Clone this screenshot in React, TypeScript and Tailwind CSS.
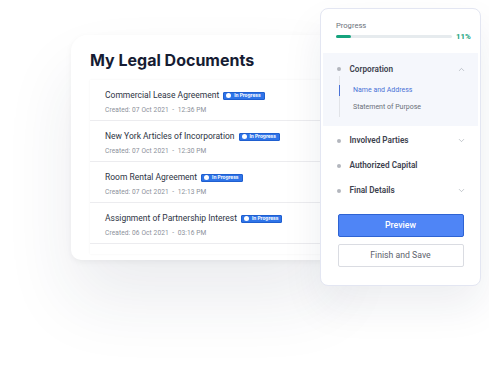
import { ChevronDown, ChevronUp } from 'lucide-react';

const docs = [
  { title: 'Commercial Lease Agreement', created: 'Created: 07 Oct 2021  -  12:36 PM' },
  { title: 'New York Articles of Incorporation', created: 'Created: 07 Oct 2021  -  12:30 PM' },
  { title: 'Room Rental Agreement', created: 'Created: 07 Oct 2021  -  12:13 PM' },
  { title: 'Assignment of Partnership Interest', created: 'Created: 06 Oct 2021  -  03:16 PM' },
];

const Badge = () => (
  <span className="ml-[4px] inline-flex h-[8px] items-center gap-[3px] rounded-[1px] border border-[#1f5fd0] bg-[#2f74e8] pl-[2px] pr-[3px]">
    <span className="h-[5px] w-[5px] rounded-full bg-white" />
    <span className="font-['Inter',sans-serif] text-[4.8px] font-bold leading-none text-white">In Progress</span>
  </span>
);

const DocRow = ({ title, created }: { title: string; created: string }) => (
  <div className="flex h-[41px] flex-col bg-white pl-[15px] pt-[10px]">
    <div className="flex items-center">
      <span className="text-[8.5px] leading-[11px] text-[#2e3444]">{title}</span>
      <Badge />
    </div>
    <span className="mt-[5px] whitespace-pre text-[6.6px] leading-[9px] tracking-[0.1px] text-[#8b909a]">{created}</span>
  </div>
);

const Step = ({ label, chevron }: { label: string; chevron?: boolean }) => (
  <div className="flex h-[25px] items-center pl-[16px] pr-[14px]">
    <span className="h-[4px] w-[4px] shrink-0 rounded-full bg-[#b3b6bd]" />
    <span className="ml-[8.5px] flex-1 text-[8.2px] font-semibold text-[#3d424e]">{label}</span>
    {chevron && <ChevronDown size={9} strokeWidth={1.5} className="text-[#9aa0aa]" />}
  </div>
);

export default function App() {
  return (
    <div className="h-[368px] w-[489px] overflow-hidden bg-white font-['Roboto',sans-serif]">
      <div className="flex items-start pl-[71px] pt-[8px]">
        <div className="mt-[27px] h-[225px] w-[260px] shrink-0 rounded-tl-[16px] rounded-bl-[10px] bg-white shadow-[0_40px_70px_rgba(30,40,80,0.09),0_2px_6px_rgba(0,0,0,0.05)]">
          <h1 className="pl-[19px] pt-[15px] font-['Inter',sans-serif] text-[16px] font-bold leading-[20px] text-[#161c33]">
            My Legal Documents
          </h1>
          <div className="ml-[19px] mt-[10px] flex h-[174px] flex-col gap-[1px] overflow-hidden bg-[#ececef] shadow-[0_0_2px_rgba(0,0,0,0.06)]">
            {docs.map((d) => (
              <DocRow key={d.title} title={d.title} created={d.created} />
            ))}
            <div className="h-[10px] bg-white" />
          </div>
        </div>

        <div className="relative z-10 -ml-[11px] flex h-[278px] w-[161px] shrink-0 flex-col rounded-[8px] border border-[#e3e6f2] bg-white shadow-[0_20px_40px_rgba(30,40,80,0.08)]">
          <div className="pl-[15px] pr-[10px] pt-[11px]">
            <div className="text-[7.6px] leading-[11px] text-[#6b707a]">Progress</div>
            <div className="flex h-[11px] items-center">
              <div className="h-[2.5px] w-[116px] shrink-0 rounded-full bg-[#e6ebee]">
                <div className="h-full w-[15px] rounded-full bg-[#15a37d]" />
              </div>
              <span className="ml-[4px] text-[7.8px] font-bold text-[#15a37d]">11%</span>
            </div>
          </div>

          <div className="mx-[2px] mt-[11px] h-[73px] bg-[#f5f7fc] pt-[9px]">
            <div className="flex h-[14px] items-center pl-[14px] pr-[12px]">
              <span className="h-[4px] w-[4px] shrink-0 rounded-full bg-[#b3b6bd]" />
              <span className="ml-[8.5px] flex-1 text-[8.2px] font-semibold text-[#3d424e]">Corporation</span>
              <ChevronUp size={9} strokeWidth={1.5} className="text-[#9aa0aa]" />
            </div>
            <div className="ml-[16px] flex border-l border-[#e1e3e8]">
              <div className="flex flex-col pb-[4px] pt-[9px]">
                <div className="-ml-px flex h-[11px] items-center border-l border-[#4a72d6] pl-[13px] text-[7px] text-[#4a72d6]">
                  Name and Address
                </div>
                <div className="mt-[5.6px] flex h-[11px] items-center pl-[13px] text-[7px] text-[#6a6f78]">
                  Statement of Purpose
                </div>
              </div>
            </div>
          </div>

          <div className="mt-[2px]">
            <Step label="Involved Parties" chevron />
            <Step label="Authorized Capital" />
            <Step label="Final Details" chevron />
          </div>

          <div className="mt-[11px] flex flex-col gap-[7px] px-[16.5px]">
            <button className="h-[23px] w-full rounded-[2px] border border-[#2e63d3] bg-[#4f85f6] text-[8.8px] font-medium text-white">
              Preview
            </button>
            <button className="h-[23px] w-full rounded-[2px] border border-[#dadce2] bg-white text-[8.7px] text-[#5d626c]">
              Finish and Save
            </button>
          </div>
        </div>
      </div>
    </div>
  );
}
